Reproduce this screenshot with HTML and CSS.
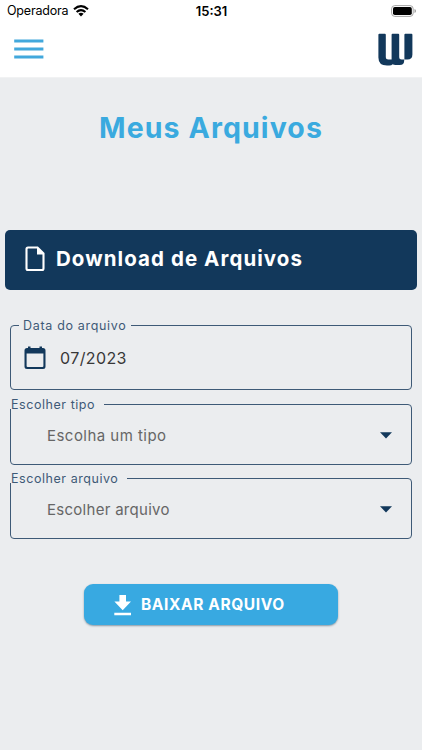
FILE: index.html
```html
<!DOCTYPE html>
<html lang="pt-BR">
<head>
<meta charset="utf-8">
<meta name="viewport" content="width=device-width, initial-scale=1">
<title>Meus Arquivos</title>
<link rel="stylesheet" href="styles.css">
</head>
<body>
<header class="header">
  <div class="status">
    <div class="carrier"><span class="carrier-name">Operadora</span>
      <svg class="wifi" width="16" height="12" viewBox="0 0 16 12"><g fill="none" stroke="#000" stroke-width="2.1"><path d="M1 4.3Q8-2 15 4.3"/><path d="M3.6 7Q8 3.1 12.4 7"/></g><path d="M5.4 8.7Q8 6.7 10.6 8.7L8 11.4Z"/></svg>
    </div>
    <span class="clock">15:31</span>
    <svg class="battery" width="26" height="12" viewBox="0 0 26 12"><rect x=".6" y=".6" width="21.6" height="10.8" rx="3.2" fill="#fff" stroke="#a5a5a5"/><rect x="2" y="2" width="18.8" height="8" rx="1.8"/><path d="M23.5 4v4q1.5-.6 1.5-2t-1.5-2" fill="#999"/></svg>
  </div>
  <nav class="toolbar">
    <svg class="menu" width="30" height="20" viewBox="0 0 30 20"><path d="M.2 2h29.2M.2 10h29.2M.2 18h29.2" stroke="#42a8dc" stroke-width="3"/></svg>
    <svg class="logo" width="36" height="34" viewBox="0 0 36 34"><path fill="#12385b" d="M1.300.8H6.900q.9 0 .9.9V24q0 2.500 2.500 2.500h3.300V1.700q0-.9.9-.9h5.800q.9 0 .9.900V24q0 2.500 2.500 2.500h2.500V27.500q0 4.500-4.500 4.500h-4q-2 0-3-.7-1.200 1.200-3.400 1.200H9Q.4 32.500.4 24.500V1.700Q.4.8 1.300.8ZM27.300.8h6.200q.9 0 .9.9V21.500q0 5-5 5h-3V1.700q0-.9.9-.9Z"/></svg>
  </nav>
</header>
<main class="content">
  <h1 class="title">Meus Arquivos</h1>
  <section class="banner">
    <svg width="20" height="26" viewBox="0 0 20 26"><path d="M3 1.500H12.500L18.500 7.500V22.500Q18.500 24 17 24H3Q1.500 24 1.500 22.500V3Q1.500 1.500 3 1.500Z" fill="none" stroke="#fff" stroke-width="2.100"/><path d="M12 1.500V8.500H19Z" fill="#fff"/></svg>
    <h2 class="banner-text">Download de Arquivos</h2>
  </section>
  <form class="form">
    <div class="field field-date">
      <span class="label label-date"><span class="label-text date-label">Data do arquivo</span></span>
      <svg width="22" height="24" viewBox="0 0 22 24"><path fill="#12385b" fill-rule="evenodd" d="M4 .5h2.500V2h9V.5H18V2h1q2.500 0 2.500 2.500v16Q21.500 23 19 23H3Q.5 23 .5 20.500v-16Q.5 2 3 2h1ZM2.600 7.500v12.500q0 1 1 1h14.800q1 0 1-1V7.500Z"/></svg>
      <span class="value date-value">07/2023</span>
    </div>
    <div class="field field-type">
      <span class="label label-select label-type"><span class="label-text type-label">Escolher tipo</span></span>
      <span class="value type-value">Escolha um tipo</span>
      <svg class="arrow" width="12" height="7" viewBox="0 0 12 7"><path d="M0 .3H12L6 6.500Z" fill="#12385b"/></svg>
    </div>
    <div class="field field-file">
      <span class="label label-select label-file"><span class="label-text file-label">Escolher arquivo</span></span>
      <span class="value file-value">Escolher arquivo</span>
      <svg class="arrow" width="12" height="7" viewBox="0 0 12 7"><path d="M0 .3H12L6 6.500Z" fill="#12385b"/></svg>
    </div>
    <button class="download" type="button">
      <svg width="18" height="21" viewBox="0 0 18 21"><path d="M5.400 0h6.600v6.500h5L8.700 15.300.4 6.500h5ZM.3 17.700h16.700v2.500H.3Z" fill="#fff"/></svg>
      <span class="download-text">BAIXAR ARQUIVO</span>
    </button>
  </form>
</main>
</body>
</html>
```

FILE: styles.css
```css
* { box-sizing: border-box; }
body { margin: 0; min-height: 750px; background: #ebedef; font-family: Inter, sans-serif; color: #12385b; }
svg { display: block; flex: none; }
.header { height: 78px; background: #fff; border-bottom: 1px solid #f1f2f3; }
.status { height: 21px; display: grid; grid-template-columns: 1fr auto 1fr; align-items: center; padding: 0 6px 0 7px; color: #000; }
.carrier { display: flex; align-items: center; gap: 5px; font-size: 12.5px; }
.carrier-name { letter-spacing: -.2px; }
.clock { font-size: 13px; font-weight: 600; letter-spacing: 0; }
.battery { justify-self: end; margin-right: -1px; }
.toolbar { height: 55px; display: flex; justify-content: space-between; align-items: center; padding: 0 8px 0 14px; }
.menu { margin-top: 1px; }
.logo { margin-top: 2px; }
.title { margin: 0; padding-top: 32px; height: 151.5px; text-align: center; font-size: 28.5px; line-height: 36px; font-weight: 700; letter-spacing: 1.1px; color: #3aaadf; white-space: nowrap; }
.banner { height: 60px; margin: 0 5px; border-radius: 5px; background: #12385b; display: flex; align-items: center; gap: 11px; padding: 0 0 1px 20px; color: #fff; }
.banner-text { margin: 0; font-size: 20.5px; line-height: 26px; font-weight: 700; letter-spacing: 1.07px; white-space: nowrap; }
.form { margin: 35.500px 10px 0; display: flex; flex-direction: column; }
.field { position: relative; border: 1px solid #3e5a77; border-radius: 4px; display: flex; align-items: center; }
.field-date { height: 65px; padding: 1px 0 0 13px; gap: 14px; }
.field-type, .field-file { height: 61px; padding: 2px 19px 0 36px; }
.field-type { margin-top: 14px; }
.field-file { margin-top: 13px; }
.label { position: absolute; background: #ebedef; height: 16px; line-height: 16px; top: -8px; font-size: 12.5px; white-space: nowrap; color: #3e5a77; }
.label-date { left: 8px; width: 112px; padding-left: 4px; }
.label-select { left: -1px; padding-left: 1px; height: 12px; line-height: 16px; }
.label-type { width: 94px; }
.label-file { width: 117px; }
.label-text { letter-spacing: .68px; }
.type-label, .file-label { letter-spacing: .55px; }
.value { font-size: 15px; line-height: 20px; letter-spacing: .46px; color: #666; white-space: nowrap; }
.file-value { letter-spacing: .28px; }
.date-value { color: #383838; font-size: 16px; letter-spacing: .4px; }
.arrow { margin-left: auto; }
.download { align-self: center; width: 254px; height: 41px; margin-top: 45px; padding: 1px 0 0 30px; border: 0; border-radius: 9px; background: #38a9e1; color: #fff; box-shadow: 0 1px 2px #8799a5; font-family: inherit; display: flex; align-items: center; gap: 9px; }
.download-text { font-size: 15.5px; line-height: 20px; font-weight: 700; letter-spacing: .6px; white-space: nowrap; }
```
